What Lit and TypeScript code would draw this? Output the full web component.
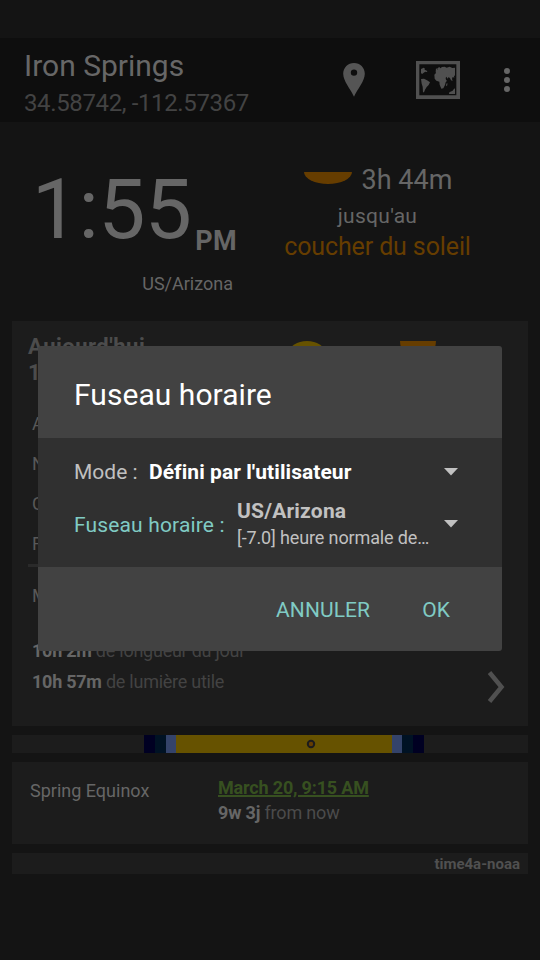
import { LitElement, html, css } from "lit";
import { customElement } from "lit/decorators.js";

interface Segment {
  width: number;
  color: string;
}

const DAYLIGHT: Segment[] = [
  { width: 132, color: "transparent" },
  { width: 11, color: "#000022" },
  { width: 11, color: "#001224" },
  { width: 10, color: "#34436a" },
  { width: 216, color: "#665200" },
  { width: 10, color: "#34436a" },
  { width: 11, color: "#001224" },
  { width: 11, color: "#000022" },
];

const TWILIGHTS = ["Ast", "Nau", "Civ", "Fin"];

@customElement("sun-header")
export class SunHeader extends LitElement {
  static styles = css`
    :host { display: flex; height: 84px; background: #0e0e0e; box-sizing: border-box; padding-left: 24px; }
    .place { flex: 1; padding-top: 10px; }
    .title { font-size: 30px; line-height: 36px; color: #676767; white-space: nowrap; }
    .coords { font-size: 24px; line-height: 28px; margin-top: 5px; letter-spacing: -0.37px; color: #434343; white-space: nowrap; }
    .actions { display: flex; align-items: center; height: 84px; }
    svg { display: block; }
    .pin { margin-right: 51px; }
    .map { margin-right: 44px; }
    .more { margin-right: 30px; }
  `;
  render() {
    return html`
      <div class="place">
        <div class="title">Iron Springs</div>
        <div class="coords">34.58742, -112.57367</div>
      </div>
      <div class="actions">
        <svg class="pin" width="22" height="34" viewBox="0 0 22 34" fill="#555">
          <path fill-rule="evenodd" d="M11 0C4.900 0 .2 4.700 .2 10.700c0 7.300 7.200 15 10.800 23.100 3.600-8.100 10.800-15.800 10.800-23.100C21.800 4.700 17.100 0 11 0zm0 6.400a3.200 3.200 0 1 1 0 6.400 3.200 3.200 0 0 1 0-6.400z"/>
        </svg>
        <svg class="map" width="44" height="38" viewBox="288 63 132 114" fill="#505050">
          <path fill-rule="evenodd" d="M288 63h132v114H288zM298 73v93h111V73z"/>
          <path d="M303 87l8-4 3 2 0 4 8 4-1 3-5-1-5 3-3 3-3 0-2-2zM303 117l9-1 9 5 9 6-4 8-6 6-5 8-3 8h-3l-1-17-3-9z"/>
          <path d="M343 104l5-5-1-3 1-12 5 6-1-5 6-4 3 4 5-4 8-1 6 3 9-3 8 4 8-1v23l-3 3 1 4-5-2-2 6 2 6-5-2-3-6-4-4-3 5-4-6-2 4 1 6 3 2-4 5-2 8-5 10-6 1-5-12-1-9-9-3-5-6z"/>
          <path d="M379 131l3-2v7l-4 3zM388 157l10-5 3-4 4-3v17h-18z"/>
        </svg>
        <svg class="more" width="6" height="24" viewBox="0 0 6 24" fill="#666">
          <circle cx="3" cy="3" r="3"/><circle cx="3" cy="12" r="3"/><circle cx="3" cy="21" r="3"/>
        </svg>
      </div>
    `;
  }
}

@customElement("timezone-dialog")
export class TimezoneDialog extends LitElement {
  static styles = css`
    :host { display: block; width: 464px; height: 305px; border-radius: 3px; overflow: hidden; background: #424242; white-space: nowrap; }
    .head { height: 92px; box-sizing: border-box; padding: 31px 0 0 36px; font-size: 30px; line-height: 36px; letter-spacing: 0.05px; color: #fff; }
    .body { height: 129px; box-sizing: border-box; background: #303030; padding: 21px 44px 0 36px; }
    .row { display: flex; align-items: center; font-size: 21px; line-height: 26px; }
    .label { color: #c0c0c0; width: 75px; }
    .mode { flex: 1; color: #fff; font-weight: 700; letter-spacing: 0.06px; }
    .row svg { position: relative; top: -0.5px; }
    .zone { margin-top: 13px; height: 50px; }
    .zone .label { color: #80cbc4; width: 163px; margin-top: 3px; letter-spacing: 0.15px; }
    .zone svg { top: 1px; }
    .value { flex: 1; color: #c1c1c1; }
    .name { font-weight: 700; line-height: 26px; letter-spacing: 0.2px; }
    .detail { font-size: 18px; line-height: 22px; margin-top: 3px; letter-spacing: -0.13px; }
    .foot { display: flex; justify-content: flex-end; gap: 52px; padding: 30px 52px 0 0; font-size: 21px; line-height: 26px; color: #80cbc4; letter-spacing: 0.1px; }
    svg { display: block; }
  `;
  render() {
    const caret = html`<svg width="14" height="8" viewBox="0 0 14 8"><path d="M0 0h14L7 7.500z" fill="#c1c1c1"/></svg>`;
    return html`
      <div class="head">Fuseau horaire</div>
      <div class="body">
        <div class="row">
          <span class="label">Mode :</span>
          <span class="mode">Défini par l'utilisateur</span>
          ${caret}
        </div>
        <div class="row zone">
          <span class="label">Fuseau horaire :</span>
          <div class="value">
            <div class="name">US/Arizona</div>
            <div class="detail">[-7.0] heure normale de…</div>
          </div>
          ${caret}
        </div>
      </div>
      <div class="foot"><span>ANNULER</span><span>OK</span></div>
    `;
  }
}

@customElement("app-root")
export class AppRoot extends LitElement {
  static styles = css`
    :host { display: block; position: relative; width: 540px; height: 960px; overflow: hidden; background: #141414; font-family: Roboto, sans-serif; color: #666; }
    svg { display: block; }
    b { font-weight: 700; }
    .status { height: 38px; }
    .now { display: flex; height: 199px; box-sizing: border-box; white-space: nowrap; }
    .clock { width: 237px; padding-top: 45.5px; box-sizing: border-box; }
    .time { display: flex; align-items: flex-start; justify-content: flex-end; height: 84px; }
    .digits { font-size: 84px; line-height: 84px; letter-spacing: -0.6px; }
    .ampm { font-size: 27px; line-height: 32px; font-weight: 700; margin: 57.500px 0 0 4px; letter-spacing: 0.3px; }
    .tz { font-size: 18px; line-height: 22px; text-align: right; margin-top: 21px; padding-right: 4px; }
    .next { width: 281px; padding-top: 42px; display: flex; flex-direction: column; align-items: center; }
    .in { display: flex; gap: 10px; font-size: 27px; line-height: 32px; padding-left: 1px; }
    .in svg { margin-top: 8px; }
    .until { font-size: 21px; line-height: 26px; margin-top: 7px; letter-spacing: 0.3px; }
    .event { font-size: 25px; line-height: 30px; margin-top: 3px; letter-spacing: -0.12px; color: #663d00; }
    .card { margin: 0 12px 9px; background: #1c1c1c; box-sizing: border-box; white-space: nowrap; }
    .today { height: 405px; padding: 13px 16px 0; }
    .top { display: flex; height: 53px; }
    .date { width: 263px; font-size: 22px; line-height: 26px; font-weight: 700; letter-spacing: 0.5px; color: #4c4c4c; }
    .icons { display: flex; gap: 75px; padding-top: 7px; margin-left: -2px; }
    .rows { padding: 17px 4px 0; font-size: 18px; line-height: 40px; height: 177px; box-sizing: border-box; color: #585858; }
    .rule { height: 3px; background: #2a2a2a; width: 100px; }
    .moon { font-size: 18px; line-height: 22px; padding: 18px 4px 0; color: #585858; }
    .lengths { display: flex; justify-content: space-between; padding: 28px 7px 0 4px; font-size: 18px; letter-spacing: -0.25px; color: #434343; }
    .lengths b { color: #666; }
    .lengths p { margin: 0; line-height: 31px; }
    .lengths svg { margin-top: 35px; }
    .lightbar { height: 18px; display: flex; position: relative; }
    .marker { position: absolute; left: 294px; top: 4px; }
    .season { height: 82px; display: flex; padding: 15px 18px 0; font-size: 18px; }
    .label { width: 188px; line-height: 22px; padding-top: 3px; }
    .when { line-height: 22px; letter-spacing: -0.17px; }
    .link { color: #375020; font-weight: 700; text-decoration: underline; text-decoration-thickness: 2px; text-underline-offset: 1px; }
    .ago { color: #4b4b4b; margin-top: 3px; }
    .ago b { color: #666; }
    .source { height: 21px; text-align: right; padding-right: 8px; font-size: 15px; line-height: 23px; font-weight: 700; color: #505050; }
    .dialog { position: absolute; left: 38px; top: 346px; }
  `;
  render() {
    return html`
      <div class="status"></div>
      <sun-header></sun-header>
      <section class="now">
        <div class="clock">
          <div class="time"><span class="digits">1:55</span><span class="ampm">PM</span></div>
          <div class="tz">US/Arizona</div>
        </div>
        <div class="next">
          <div class="in">
            <svg width="48" height="12" viewBox="0 0 48 12"><path d="M0 0h48a24 12 0 0 1-48 0z" fill="#663d00"/></svg>
            <span>3h 44m</span>
          </div>
          <div class="until">jusqu'au</div>
          <div class="event">coucher du soleil</div>
        </div>
      </section>
      <section class="card today">
        <div class="top">
          <div class="date"><div>Aujourd'hui</div><div>13</div></div>
          <div class="icons">
            <svg width="36" height="24" viewBox="0 0 36 24"><ellipse cx="18" cy="12" rx="18" ry="12" fill="#665200"/></svg>
            <svg width="36" height="18" viewBox="0 0 36 18"><path d="M0 0h36a18 18 0 0 1-36 0z" fill="#663d00"/></svg>
          </div>
        </div>
        <div class="rows">${TWILIGHTS.map((t) => html`<div>${t}</div>`)}</div>
        <div class="rule"></div>
        <div class="moon">Midi</div>
        <div class="lengths">
          <div>
            <p><b>10h 2m</b> de longueur du jour</p>
            <p><b>10h 57m</b> de lumière utile</p>
          </div>
          <svg width="18" height="34" viewBox="0 0 18 34"><path d="M2.500 2.500L14.500 17 2.500 31.500" fill="none" stroke="#505050" stroke-width="4.500"/></svg>
        </div>
      </section>
      <div class="card lightbar">
        ${DAYLIGHT.map((s) => html`<div style="width:${s.width}px;background:${s.color}"></div>`)}
        <svg class="marker" width="10" height="10" viewBox="0 0 10 10"><circle cx="5" cy="5" r="3.200" fill="#663d00" stroke="#1c1c1c" stroke-width="2"/></svg>
      </div>
      <section class="card season">
        <div class="label">Spring Equinox</div>
        <div class="when">
          <div class="link">March 20, 9:15 AM</div>
          <div class="ago"><b>9w 3j</b> from now</div>
        </div>
      </section>
      <div class="card source">time4a-noaa</div>
      <timezone-dialog class="dialog"></timezone-dialog>
    `;
  }
}
